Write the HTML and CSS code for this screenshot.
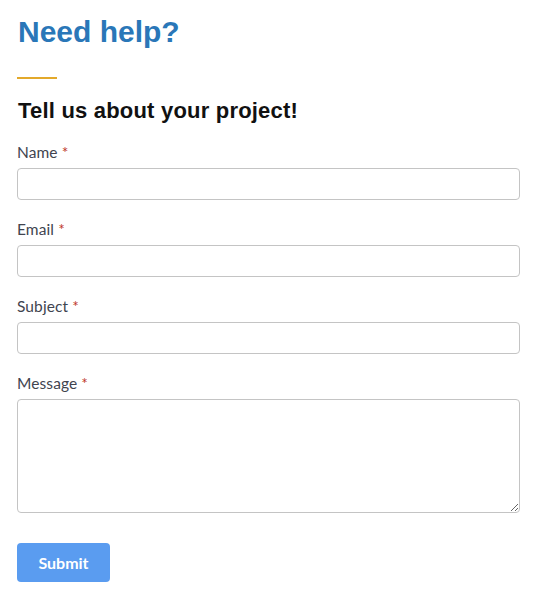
FILE: index.html
```html
<!DOCTYPE html>
<html>
<head>
<meta charset="utf-8">
<link rel="stylesheet" href="styles.css">
</head>
<body>
<div class="wrap">
  <h1 class="title">Need help?</h1>
  <div class="rule"></div>
  <h2 class="subtitle">Tell us about your project!</h2>
  <form class="form">
    <div class="field">
      <label class="label">Name <span class="req">*</span></label>
      <input class="input" type="text">
    </div>
    <div class="field">
      <label class="label">Email <span class="req">*</span></label>
      <input class="input" type="text">
    </div>
    <div class="field">
      <label class="label">Subject <span class="req">*</span></label>
      <input class="input" type="text">
    </div>
    <div class="field">
      <label class="label">Message <span class="req">*</span></label>
      <textarea class="textarea"></textarea>
    </div>
    <button class="submit" type="button">Submit</button>
  </form>
</div>
</body>
</html>
```
FILE: styles.css
```css
html, body {
  margin: 0;
  padding: 0;
  background: #fff;
}
.wrap {
  width: 503px;
  padding: 0 0 0 17px;
}
.title {
  margin: 0;
  padding-top: 14px;
  font-family: "Liberation Sans", Arial, sans-serif;
  font-weight: bold;
  font-size: 30px;
  line-height: 36px;
  color: #2a77b8;
  padding-left: 1px;
}
.rule {
  width: 40px;
  height: 2px;
  background: #e3a92b;
  margin-top: 27px;
}
.subtitle {
  margin: 19px 0 0 1px;
  font-family: "Liberation Sans", Arial, sans-serif;
  font-weight: bold;
  font-size: 22px;
  letter-spacing: 0.2px;
  line-height: 26px;
  color: #111;
}
.form {
  display: flex;
  flex-direction: column;
  margin-top: 19px;
}
.field {
  display: flex;
  flex-direction: column;
  margin-bottom: 20px;
}
.label {
  font-family: Lato, "Open Sans", sans-serif;
  font-size: 15.5px;
  letter-spacing: 0.1px;
  line-height: 18px;
  color: #41444f;
  margin-bottom: 7px;
}
.req {
  color: #c0392b;
}
.input, .textarea {
  box-sizing: border-box;
  width: 503px;
  border: 1px solid #c4c4c4;
  border-radius: 4px;
  background: #fff;
  margin: 0;
  font-family: Lato, sans-serif;
  font-size: 14px;
}
.input {
  height: 32px;
}
.textarea {
  height: 114px;
  resize: vertical;
}
.submit {
  align-self: flex-start;
  width: 93px;
  height: 39px;
  margin-top: 10px;
  background: #5a9cf0;
  color: #fff;
  border: none;
  border-radius: 4px;
  font-family: Lato, sans-serif;
  font-weight: bold;
  font-size: 16px;
}
```
